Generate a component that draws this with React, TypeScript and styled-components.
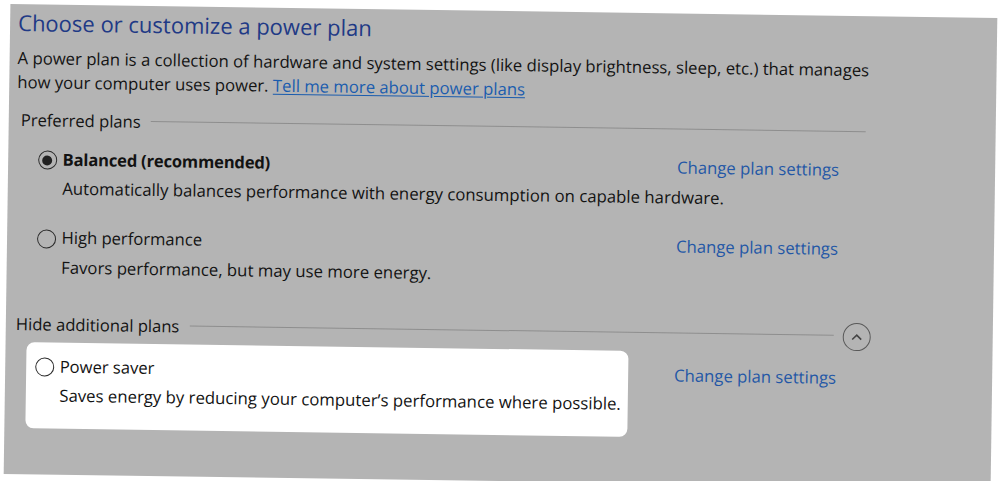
import styled, { createGlobalStyle } from 'styled-components';

const GlobalStyle = createGlobalStyle`
  html, body {
    margin: 0;
    background: #ffffff;
    overflow: hidden;
  }
  body {
    font-family: 'Open Sans', 'Noto Sans', sans-serif;
    color: #121212;
  }
`;

// the screenshot is slightly tilted, so the whole panel is turned a little
const Panel = styled.section`
  box-sizing: border-box;
  width: 987px;
  height: 470px;
  margin: 10.5px 0 0 6.5px;
  padding: 3.5px 0 0 8px;
  background: #b4b4b4;
  transform: rotate(0.82deg);
  display: flex;
  flex-direction: column;
`;

const Title = styled.h1`
  margin: 0;
  font-size: 22px;
  font-weight: 400;
  line-height: 28px;
  color: #1f3a86;
`;

const Intro = styled.p`
  margin: 10.5px 0 0;
  width: 874px;
  font-size: 16.7px;
  line-height: 24px;
`;

const HelpLink = styled.a`
  color: #1a5cae;
  text-decoration: underline;
  text-underline-offset: 2px;
  cursor: pointer;
`;

const SectionHeader = styled.div<{ $indent: number; $width: number; $tall?: boolean }>`
  display: flex;
  align-items: center;
  gap: 10px;
  margin-left: ${(p) => p.$indent}px;
  width: ${(p) => p.$width}px;
  height: ${(p) => (p.$tall ? 28 : 20)}px;
  font-size: 16.6px;
  line-height: 20px;
`;

const Rule = styled.span`
  flex: 1;
  height: 1px;
  background: #8e8e8e;
`;

const ToggleButton = styled.button`
  box-sizing: border-box;
  width: 28px;
  height: 28px;
  padding: 0;
  margin: 3px 0 0 -1px;
  border: 1.5px solid #595959;
  border-radius: 50%;
  background: transparent;
  display: grid;
  place-items: center;
  cursor: pointer;
`;

const PlanRow = styled.div`
  display: flex;
  align-items: flex-start;
`;

const PlanCard = styled.div<{ $highlight?: boolean }>`
  box-sizing: border-box;
  width: 602px;
  margin-left: 13px;
  padding: ${(p) => (p.$highlight ? 13.5 : 15)}px 0 ${(p) => (p.$highlight ? 22.5 : 13.5)}px 8.5px;
  border-radius: 8px;
  background: ${(p) => (p.$highlight ? '#ffffff' : 'transparent')};
`;

const PlanLabel = styled.label`
  display: flex;
  align-items: center;
  gap: 6px;
  font-size: 16.6px;
  line-height: 20px;
`;

const PlanName = styled.span<{ $bold?: boolean }>`
  font-weight: ${(p) => (p.$bold ? 700 : 400)};
  letter-spacing: ${(p) => (p.$bold ? '-0.2px' : '0')};
`;

const Radio = styled.span<{ $checked?: boolean }>`
  box-sizing: border-box;
  flex: none;
  width: 19px;
  height: 19px;
  margin-top: 2px;
  border: 1.4px solid #2b2b2b;
  border-radius: 50%;
  display: grid;
  place-items: center;

  &::after {
    content: '';
    width: 10px;
    height: 10px;
    border-radius: 50%;
    background: ${(p) => (p.$checked ? '#222222' : 'transparent')};
  }
`;

const PlanText = styled.div`
  margin: 9px 0 0 25px;
  font-size: 16.75px;
  line-height: 20px;
  white-space: nowrap;
`;

const ChangeLink = styled.a<{ $offset: number }>`
  margin: ${(p) => p.$offset}px 0 0 46px;
  font-size: 16.7px;
  line-height: 20px;
  color: #2357a6;
  cursor: pointer;
`;

type Plan = {
  name: string;
  text: string;
  checked?: boolean;
  highlight?: boolean;
};

function PlanItem({ plan, gap }: { plan: Plan; gap: number }) {
  return (
    <PlanRow style={{ marginTop: gap }}>
      <PlanCard $highlight={plan.highlight}>
        <PlanLabel>
          <Radio $checked={plan.checked} />
          <PlanName $bold={plan.checked}>{plan.name}</PlanName>
        </PlanLabel>
        <PlanText>{plan.text}</PlanText>
      </PlanCard>
      <ChangeLink $offset={plan.highlight ? 14.5 : 15}>Change plan settings</ChangeLink>
    </PlanRow>
  );
}

const preferred: Plan[] = [
  {
    name: 'Balanced (recommended)',
    text: 'Automatically balances performance with energy consumption on capable hardware.',
    checked: true,
  },
  {
    name: 'High performance',
    text: 'Favors performance, but may use more energy.',
  },
];

const extra: Plan = {
  name: 'Power saver',
  text: "Saves energy by reducing your computer\u2019s performance where possible.",
  highlight: true,
};

export default function App() {
  return (
    <>
      <GlobalStyle />
      <Panel>
        <Title>Choose or customize a power plan</Title>
        <Intro>
          A power plan is a collection of hardware and system settings (like display brightness, sleep, etc.) that
          manages how your computer uses power. <HelpLink>Tell me more about power plans</HelpLink>
        </Intro>

        <SectionHeader $indent={4} $width={845} style={{ marginTop: 15.5 }}>
          Preferred plans
          <Rule />
        </SectionHeader>

        <PlanItem plan={preferred[0]} gap={3.5} />
        <PlanItem plan={preferred[1]} gap={0} />

        <SectionHeader $indent={2} $width={855} $tall style={{ marginTop: 19.5 }}>
          Hide additional plans
          <Rule />
          <ToggleButton aria-label="Hide additional plans">
            <svg width="12" height="8" viewBox="0 0 12 8">
              <polyline points="1.5,6.5 6,2 10.5,6.5" fill="none" stroke="#454545" strokeWidth="1.6" />
            </svg>
          </ToggleButton>
        </SectionHeader>

        <PlanItem plan={extra} gap={4.3} />
      </Panel>
    </>
  );
}
